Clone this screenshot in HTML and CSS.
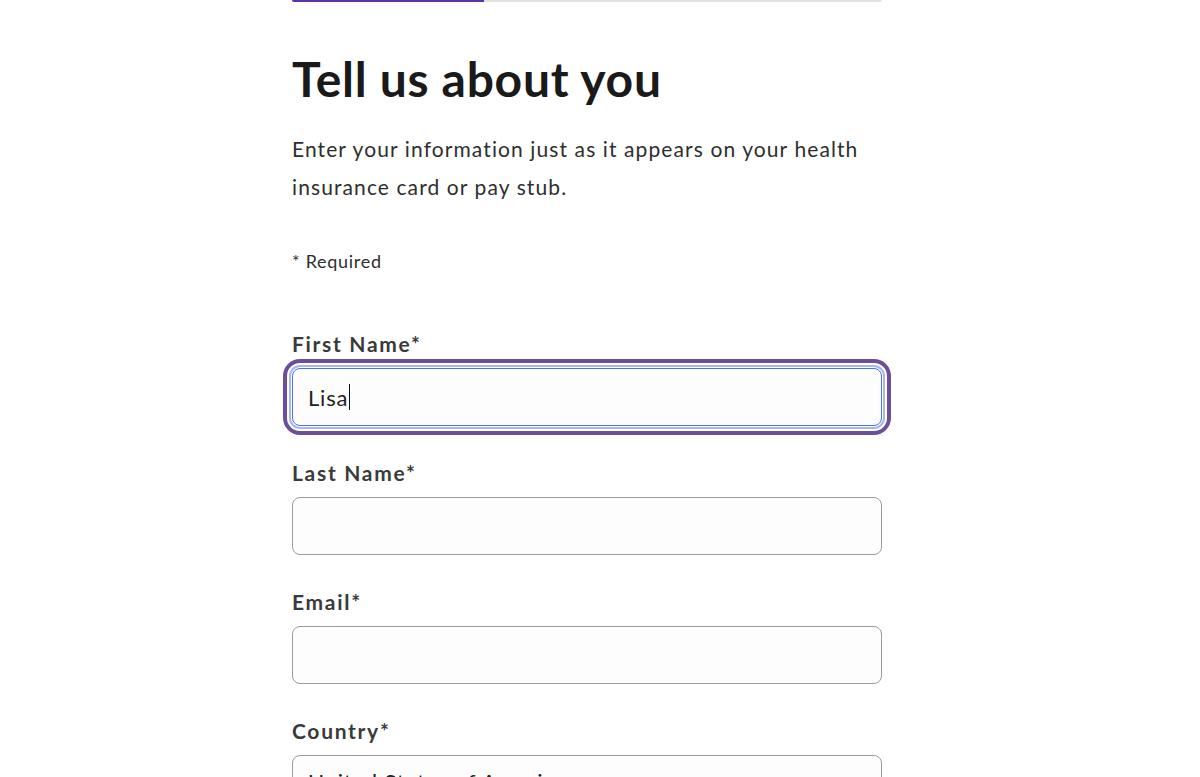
FILE: index.html
```html
<!DOCTYPE html>
<html lang="en">
<head>
<meta charset="utf-8">
<title>Tell us about you</title>
<link rel="stylesheet" href="styles.css">
</head>
<body>
<main class="page">
  <div class="column">
    <div class="progress"><div class="progress-fill" style="width:32.5%"></div></div>
    <h1 class="title">Tell us about you</h1>
    <p class="intro">Enter your information just as it appears on your health insurance card or pay stub.</p>
    <p class="required-note">* Required</p>
    <form class="form">
      <div class="field">
        <label class="label" for="first">First Name*</label>
        <div class="input is-focused" id="first"><span class="value">Lisa</span><span class="caret"></span></div>
      </div>
      <div class="field">
        <label class="label" for="last">Last Name*</label>
        <div class="input" id="last"></div>
      </div>
      <div class="field">
        <label class="label" for="email">Email*</label>
        <div class="input" id="email"></div>
      </div>
      <div class="field">
        <label class="label" for="country">Country*</label>
        <div class="input select" id="country"><span class="value">United States of America</span></div>
      </div>
    </form>
  </div>
</main>
</body>
</html>
```

FILE: styles.css
```css
* { box-sizing: border-box; }
html, body { margin: 0; padding: 0; background: #ffffff; }
body {
  font-family: Lato, "Noto Sans", sans-serif;
  color: #333333;
  height: 777px;
  overflow: hidden;
}
.page { padding-left: 292px; }
.column { width: 590px; }
.progress {
  height: 2px;
  background: #e2e2e2;
  border-radius: 0 0 2px 2px;
  overflow: hidden;
}
.progress-fill { height: 100%; background: #5b35a6; }
.title {
  margin: 49px 0 0;
  font-size: 48px;
  line-height: 55px;
  font-weight: 700;
  color: #1a1a1a;
  letter-spacing: 0.7px;
}
.intro {
  margin: 24px 0 0;
  font-size: 21px;
  line-height: 38px;
  color: #2e2e2e;
  letter-spacing: 1.1px;
}
.required-note {
  margin: 43px 0 0;
  font-size: 18px;
  line-height: 24px;
  color: #2e2e2e;
  letter-spacing: 0.7px;
}
.form { margin-top: 59px; display: flex; flex-direction: column; gap: 35px; }
.field { display: flex; flex-direction: column; gap: 12px; }
.label {
  font-size: 21px;
  line-height: 24px;
  font-weight: 700;
  color: #3a3a3a;
  letter-spacing: 1.7px;
}
.input {
  height: 58px;
  border: 1px solid #9b9b9b;
  border-radius: 8px;
  background: #fdfdfd;
  display: flex;
  align-items: center;
  padding: 0 15px;
  font-size: 22px;
  color: #222222;
  letter-spacing: 0.8px;
}
.input.is-focused {
  border-color: #4d6ff0;
  box-shadow: 0 0 0 1px #ffffff, 0 0 0 3px #a3b6f8, 0 0 0 5px #ffffff, 0 0 0 9px #6a509c;
}
.input.select { align-items: flex-start; padding-top: 12px; }
.caret {
  display: inline-block;
  width: 1px;
  height: 26px;
  background: #111111;
  margin-left: 1px;
}
```
